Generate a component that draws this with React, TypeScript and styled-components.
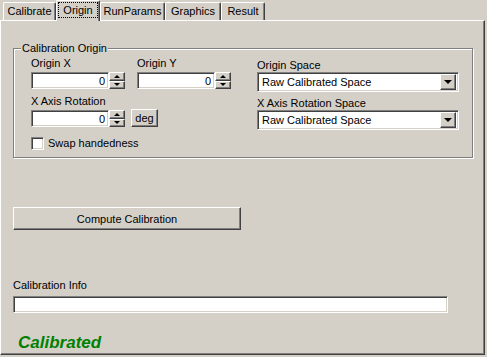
import React from 'react'
import styled, { createGlobalStyle, css } from 'styled-components'

const GlobalStyle = createGlobalStyle`
  html, body {
    margin: 0;
    padding: 0;
    background: #d4d0c8;
  }
  body {
    font-family: "Liberation Sans", Arial, sans-serif;
    font-size: 11px;
    color: #000;
  }
`

// classic 3d edges
const sunken = css`
  box-sizing: border-box;
  background: #fff;
  border: 1px solid;
  border-color: #808080 #fff #fff #808080;
  box-shadow: inset 1px 1px 0 #404040, inset -1px -1px 0 #d4d0c8;
`

const raised = css`
  box-sizing: border-box;
  background: #d4d0c8;
  border: 1px solid;
  border-color: #fff #404040 #404040 #fff;
  box-shadow: inset -1px -1px 0 #808080, inset 1px 1px 0 #d4d0c8;
`

const Window = styled.div`
  width: 487px;
  height: 357px;
  background: #d4d0c8;
  display: flex;
  flex-direction: column;
  overflow: hidden;
`

const TabStrip = styled.div`
  display: flex;
  align-items: flex-end;
  height: 20px;
  padding-left: 3px;
  position: relative;
  z-index: 1;
`

const Tab = styled.div<{ $w: number; $active?: boolean }>`
  box-sizing: border-box;
  width: ${(p) => p.$w}px;
  height: ${(p) => (p.$active ? 21 : 18)}px;
  margin-bottom: ${(p) => (p.$active ? -1 : 0)}px;
  background: #d4d0c8;
  border-left: 1px solid #fff;
  border-top: 1px solid #fff;
  border-right: 1px solid #404040;
  border-radius: 2px 2px 0 0;
  box-shadow: inset -1px 0 0 #808080;
  display: flex;
  justify-content: center;
  align-items: flex-start;
  padding: ${(p) => (p.$active ? '1px 1px 0 1px' : '2px 0 0 0')};
  line-height: 13px;
`

const FocusLabel = styled.span`
  box-sizing: border-box;
  flex: 1;
  height: 16px;
  border: 1px dotted #000;
  text-align: center;
  padding-top: 1px;
  line-height: 13px;
`

const Panel = styled.div`
  box-sizing: border-box;
  width: 485px;
  height: 335px;
  border: 1px solid;
  border-color: #fff #404040 #404040 #fff;
  box-shadow: inset -1px -1px 0 #808080;
  padding-left: 12px;
  display: flex;
  flex-direction: column;
  align-items: flex-start;
`

const GroupBox = styled.fieldset`
  box-sizing: border-box;
  margin: 21px 0 0 0;
  width: 460px;
  height: 116px;
  padding: 2px 0 0 17px;
  border: 1px solid #808080;
  box-shadow: inset 1px 1px 0 #fff, 1px 1px 0 #fff;
  display: flex;
`

const Legend = styled.legend`
  margin-left: -10px;
  padding: 0 1px;
  line-height: 13px;
  background: #d4d0c8;
`

const Column = styled.div<{ $w?: number }>`
  display: flex;
  flex-direction: column;
  width: ${(p) => (p.$w ? `${p.$w}px` : 'auto')};
`

const Row = styled.div<{ $gap: number; $top?: number }>`
  display: flex;
  align-items: flex-end;
  gap: ${(p) => p.$gap}px;
  margin-top: ${(p) => p.$top ?? 0}px;
`

const Field = styled.div`
  display: flex;
  flex-direction: column;
  gap: 2px;
`

const Label = styled.div<{ $top?: number }>`
  line-height: 13px;
  margin-top: ${(p) => p.$top ?? 0}px;
  white-space: nowrap;
`

const SpinBox = styled.div`
  display: flex;
`

const NumInput = styled.input`
  ${sunken};
  width: 78px;
  height: 17px;
  margin: 0;
  padding: 0 3px 0 0;
  font: inherit;
  line-height: 13px;
  text-align: right;
  outline: none;
`

const Spinner = styled.div`
  display: flex;
  flex-direction: column;
  width: 16px;
  height: 17px;
`

const SpinButton = styled.div`
  ${raised};
  flex: 1;
  display: flex;
  align-items: center;
  justify-content: center;
`

const Arrow = styled.span<{ $dir: 'up' | 'down'; $size?: number }>`
  width: 0;
  height: 0;
  border-left: ${(p) => p.$size ?? 3}px solid transparent;
  border-right: ${(p) => p.$size ?? 3}px solid transparent;
  ${(p) =>
    p.$dir === 'up'
      ? css`border-bottom: ${p.$size ?? 3}px solid #000;`
      : css`border-top: ${p.$size ?? 3}px solid #000;`}
`

const SmallButton = styled.button`
  ${raised};
  width: 27px;
  height: 18px;
  margin: 0 0 0 6px;
  padding: 0;
  font: inherit;
  color: #000;
  line-height: 13px;
`

const CheckRow = styled.label`
  display: flex;
  align-items: center;
  gap: 4px;
  margin-top: 10px;
  line-height: 13px;
`

const CheckBox = styled.span`
  ${sunken};
  width: 13px;
  height: 13px;
`

const Combo = styled.div`
  ${sunken};
  width: 202px;
  height: 20px;
  display: flex;
  align-items: center;
  padding: 2px 2px 2px 4px;
`

const ComboText = styled.span`
  flex: 1;
  line-height: 13px;
`

const DropButton = styled.div`
  ${raised};
  width: 16px;
  height: 16px;
  display: flex;
  align-items: center;
  justify-content: center;
`

const PushButton = styled.button`
  ${raised};
  width: 228px;
  height: 23px;
  margin: 49px 0 0 0;
  padding: 0;
  font: inherit;
  color: #000;
`

const InfoBox = styled.div`
  ${sunken};
  width: 435px;
  height: 17px;
  margin-top: 4px;
`

const Status = styled.div`
  margin: 20px 0 0 5px;
  font-size: 17px;
  line-height: 20px;
  font-weight: bold;
  font-style: italic;
  color: #008000;
`

function Spin() {
  return (
    <SpinBox>
      <NumInput readOnly value="0" />
      <Spinner>
        <SpinButton>
          <Arrow $dir="up" />
        </SpinButton>
        <SpinButton>
          <Arrow $dir="down" />
        </SpinButton>
      </Spinner>
    </SpinBox>
  )
}

function ComboBox({ value }: { value: string }) {
  return (
    <Combo>
      <ComboText>{value}</ComboText>
      <DropButton>
        <Arrow $dir="down" $size={4} />
      </DropButton>
    </Combo>
  )
}

const tabs = [
  { name: 'Calibrate', w: 53 },
  { name: 'Origin', w: 44 },
  { name: 'RunParams', w: 65 },
  { name: 'Graphics', w: 56 },
  { name: 'Result', w: 44 },
]

export default function App() {
  return (
    <Window>
      <GlobalStyle />
      <TabStrip>
        {tabs.map((t) =>
          t.name === 'Origin' ? (
            <Tab key={t.name} $w={t.w} $active>
              <FocusLabel>{t.name}</FocusLabel>
            </Tab>
          ) : (
            <Tab key={t.name} $w={t.w}>
              {t.name}
            </Tab>
          ),
        )}
      </TabStrip>
      <Panel>
        <GroupBox>
          <Legend>Calibration Origin</Legend>
          <Column $w={226}>
            <Row $gap={12}>
              <Field>
                <Label>Origin X</Label>
                <Spin />
              </Field>
              <Field>
                <Label>Origin Y</Label>
                <Spin />
              </Field>
            </Row>
            <Row $gap={0} $top={6}>
              <Field>
                <Label>X Axis Rotation</Label>
                <Spin />
              </Field>
              <SmallButton>deg</SmallButton>
            </Row>
            <CheckRow>
              <CheckBox />
              Swap handedness
            </CheckRow>
          </Column>
          <Column>
            <Label $top={2}>Origin Space</Label>
            <ComboBox value="Raw Calibrated Space" />
            <Label $top={5}>X Axis Rotation Space</Label>
            <ComboBox value="Raw Calibrated Space" />
          </Column>
        </GroupBox>
        <PushButton>Compute Calibration</PushButton>
        <Label $top={49}>Calibration Info</Label>
        <InfoBox />
        <Status>Calibrated</Status>
      </Panel>
    </Window>
  )
}
